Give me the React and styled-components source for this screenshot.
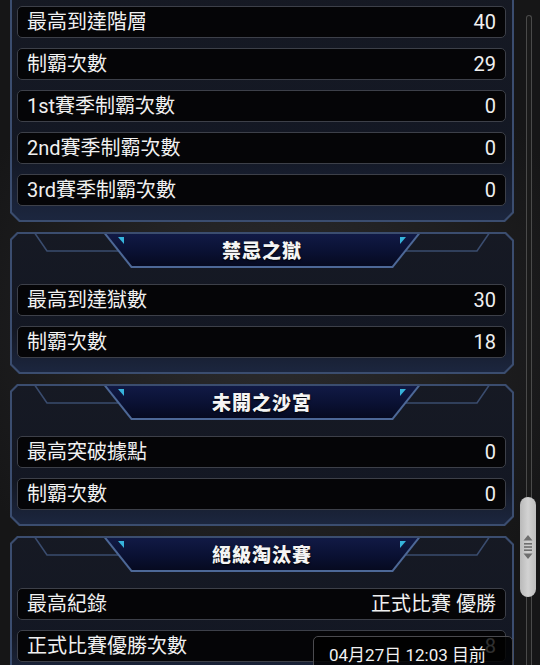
import React from 'react';
import styled, { createGlobalStyle } from 'styled-components';

const GlobalStyle = createGlobalStyle`
  html, body {
    margin: 0;
    padding: 0;
    height: 100%;
    overflow: hidden;
  }
  body {
    background: radial-gradient(circle at 270px 330px, #2b2b2d 0, #222224 35%, #161617 75%);
    font-family: Roboto, "Noto Sans CJK TC", sans-serif;
    color: #f2f2f2;
  }
`;

const sections = [
  {
    cut: true,
    rows: [
      ['最高到達階層', '40'],
      ['制霸次數', '29'],
      ['1st賽季制霸次數', '0'],
      ['2nd賽季制霸次數', '0'],
      ['3rd賽季制霸次數', '0'],
    ],
  },
  {
    title: '禁忌之獄',
    rows: [
      ['最高到達獄數', '30'],
      ['制霸次數', '18'],
    ],
  },
  {
    title: '未開之沙宮',
    rows: [
      ['最高突破據點', '0'],
      ['制霸次數', '0'],
    ],
  },
  {
    title: '絕級淘汰賽',
    rows: [
      ['最高紀錄', '正式比賽 優勝'],
      ['正式比賽優勝次數', '8'],
    ],
  },
];

const HeaderLines = () => (
  <Lines width="500" height="34" viewBox="0 0 500 34">
    <path d="M22 -2 L35 17 L108 17" fill="none" stroke="#3a4c6e" strokeWidth="1.6" />
    <path d="M478 -2 L465 17 L392 17" fill="none" stroke="#3a4c6e" strokeWidth="1.6" />
  </Lines>
);

const Section = ({ title, rows, cut }) => (
  <Frame $cut={cut}>
    <Inner>
      {title && (
        <Header>
          <HeaderLines />
          <Banner>
            <BannerFill>
              <Marker $side="left" />
              <Marker $side="right" />
              <Title>{title}</Title>
            </BannerFill>
          </Banner>
        </Header>
      )}
      <Rows>
        {rows.map(([label, value], idx) => (
          <Row key={idx}>
            <Label>{label}</Label>
            <Value>{value}</Value>
          </Row>
        ))}
      </Rows>
    </Inner>
  </Frame>
);

const ScrollIcon = () => (
  <svg width="10" height="26" viewBox="0 0 10 26">
    <path d="M5 1 L9.5 6.5 L0.5 6.5 Z" fill="#6e6e6e" />
    <rect x="1" y="9" width="8" height="1.6" fill="#6e6e6e" />
    <rect x="1" y="12.2" width="8" height="1.6" fill="#6e6e6e" />
    <rect x="1" y="15.4" width="8" height="1.6" fill="#6e6e6e" />
    <path d="M5 25 L9.5 19.5 L0.5 19.5 Z" fill="#6e6e6e" />
  </svg>
);

const App = () => {
  return (
    <>
      <GlobalStyle />
      <Page>
        <Main>
          {sections.map((s, idx) => (
            <Section key={idx} {...s} />
          ))}
        </Main>
        <ScrollCol>
          <Track />
          <Thumb>
            <ScrollIcon />
          </Thumb>
        </ScrollCol>
        <Toast>04月27日 12:03 目前</Toast>
      </Page>
    </>
  );
};

export default App;

const Page = styled.div`
  position: relative;
  display: flex;
  width: 540px;
  height: 665px;
  overflow: hidden;
`;

const Main = styled.div`
  flex: none;
  width: 504px;
  padding-left: 10px;
  display: flex;
  flex-direction: column;
  gap: 10px;
`;

const Frame = styled.div`
  padding: 2px;
  margin-top: ${(p) => (p.$cut ? '-12px' : '0')};
  background: #3b4d6f;
  clip-path: polygon(7px 0, calc(100% - 8px) 0, 100% 8px, 100% calc(100% - 9px), calc(100% - 9px) 100%, 9px 100%, 0 calc(100% - 9px), 0 7px);
`;

const Inner = styled.div`
  position: relative;
  background: linear-gradient(to bottom, rgba(19, 21, 29, 0.92) 0%, rgba(16, 19, 29, 0.92) 70%, rgba(26, 36, 60, 0.95) 100%);
  clip-path: polygon(6px 0, calc(100% - 7px) 0, 100% 7px, 100% calc(100% - 8px), calc(100% - 8px) 100%, 8px 100%, 0 calc(100% - 8px), 0 6px);
`;

const Header = styled.div`
  position: relative;
  height: 34px;
  display: flex;
  justify-content: center;
`;

const Lines = styled.svg`
  position: absolute;
  left: 0;
  top: 0;
`;

const Banner = styled.div`
  position: relative;
  width: 316px;
  height: 34px;
  background: #4d6897;
  clip-path: polygon(0 0, 100% 0, calc(100% - 27px) 100%, 27px 100%);
`;

const BannerFill = styled.div`
  position: absolute;
  inset: 0 0 2px 0;
  display: flex;
  align-items: center;
  justify-content: center;
  background: linear-gradient(to bottom, #111a45 0%, #0a1133 55%, #060a20 100%);
  clip-path: polygon(2.5px 0, calc(100% - 2.5px) 0, calc(100% - 28px) 100%, 28px 100%);
`;

const Marker = styled.div`
  position: absolute;
  top: 3px;
  ${(p) => (p.$side === 'left' ? 'left: 14px;' : 'right: 14px;')}
  width: 6px;
  height: 7px;
  background: #36b4dc;
  clip-path: ${(p) =>
    p.$side === 'left' ? 'polygon(0 0, 100% 0, 100% 100%)' : 'polygon(0 0, 100% 0, 0 100%)'};
`;

const Title = styled.div`
  font-family: "Noto Sans CJK TC", sans-serif;
  font-weight: 900;
  font-size: 19px;
  letter-spacing: 1px;
  color: #f4f4f4;
  text-shadow: 0 1px 2px #000;
  margin-top: -1px;
`;

const Rows = styled.div`
  display: flex;
  flex-direction: column;
  gap: 10px;
  padding: 16px 6px 14px 5px;
`;

const Row = styled.div`
  height: 32px;
  box-sizing: border-box;
  display: flex;
  align-items: center;
  justify-content: space-between;
  padding: 0 9px 0 9px;
  background: #050507;
  border: 1px solid #3d4049;
  border-radius: 5px;
  font-size: 20px;
  line-height: 1;
`;

const Label = styled.span`
  color: #f0f0f0;
  white-space: nowrap;
`;

const Value = styled.span`
  color: #f0f0f0;
  white-space: nowrap;
`;

const ScrollCol = styled.div`
  position: relative;
  flex: 1;
`;

const Track = styled.div`
  position: absolute;
  left: 12px;
  top: 15px;
  bottom: 0;
  width: 4px;
  border: 1px solid #4a4a4a;
  border-bottom: none;
  border-radius: 3px 3px 0 0;
  background: #1a1a1a;
`;

const Thumb = styled.div`
  position: absolute;
  left: 6px;
  top: 497px;
  width: 16px;
  height: 100px;
  border-radius: 8px;
  background: linear-gradient(to right, #b9b9b9, #d2d2d2 50%, #bdbdbd);
  display: flex;
  align-items: center;
  justify-content: center;
`;

const Toast = styled.div`
  position: absolute;
  left: 313px;
  top: 636px;
  width: 200px;
  height: 36px;
  box-sizing: border-box;
  padding: 4px 26px 0 0;
  background: rgba(0, 0, 0, 0.8);
  border: 1px solid #4b4b4f;
  border-radius: 5px;
  font-size: 17px;
  color: #f2f2f2;
  text-align: right;
  white-space: nowrap;
`;
